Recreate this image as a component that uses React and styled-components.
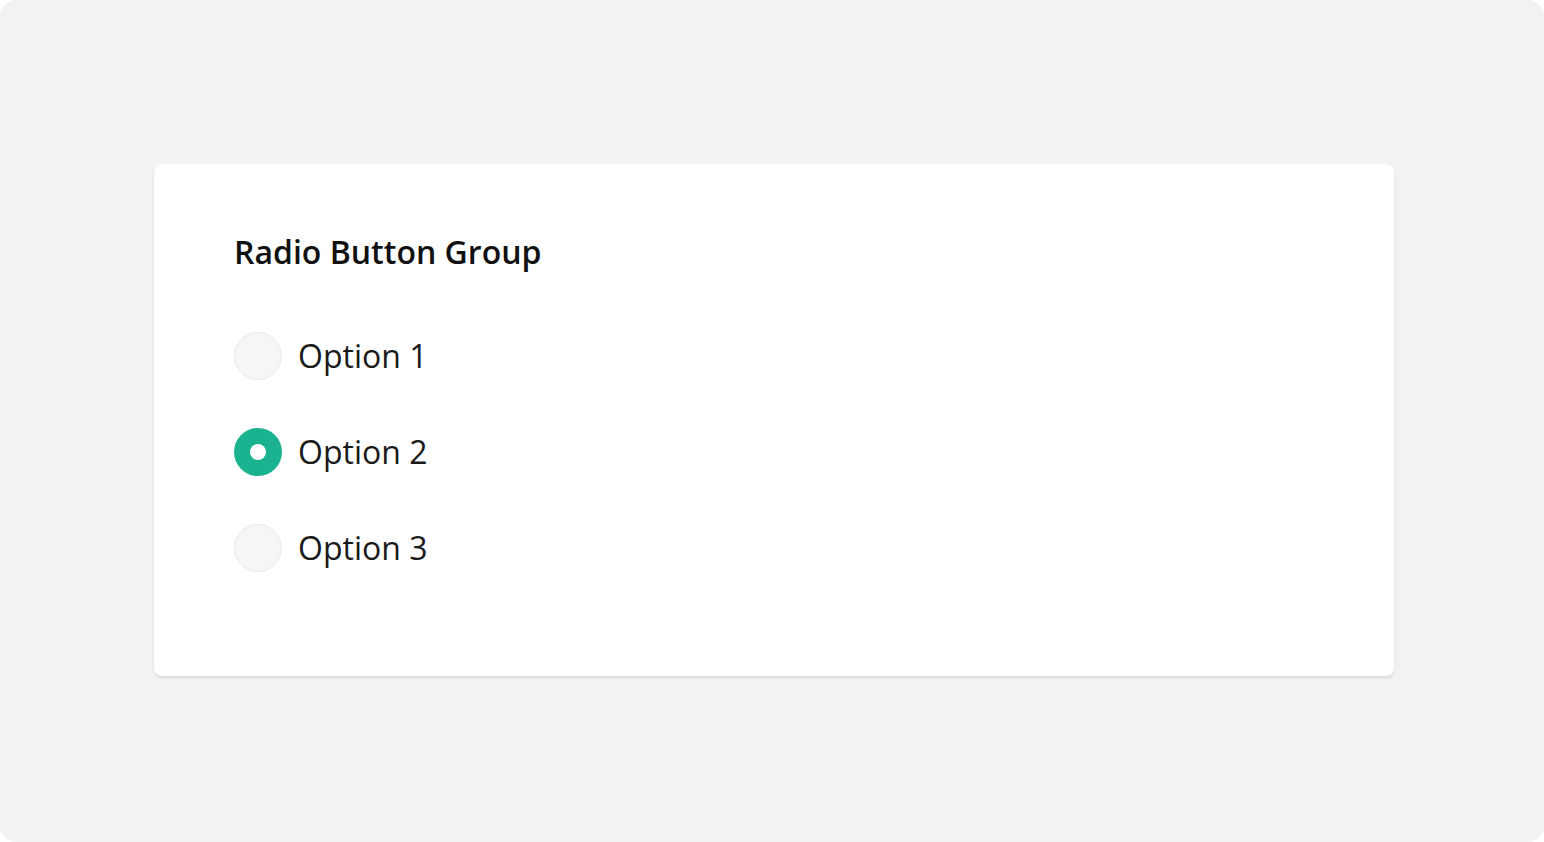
import React, { useState } from "react";
import styled, { createGlobalStyle } from "styled-components";

const Global = createGlobalStyle`
  html, body { margin: 0; padding: 0; background: #ffffff; }
  body { font-family: "Open Sans", "Noto Sans", sans-serif; }
  * { box-sizing: border-box; }
`;

const Frame = styled.div`
  width: 1544px;
  height: 842px;
  background: #f2f2f2;
  border-radius: 16px;
  padding: 164px 150px 0 154px;
  display: flex;
  align-items: flex-start;
`;

const Card = styled.div`
  width: 1240px;
  height: 512px;
  background: #ffffff;
  border-radius: 8px;
  box-shadow: 0 2px 3px rgba(0, 0, 0, 0.1);
  padding: 66px 80px;
  display: flex;
  flex-direction: column;
`;

const Title = styled.h2`
  margin: 0 0 58px;
  font-size: 32px;
  font-weight: 600;
  color: #111111;
  line-height: 44px;
`;

const List = styled.div`
  display: flex;
  flex-direction: column;
  gap: 48px;
`;

const Row = styled.label`
  display: flex;
  align-items: center;
  gap: 16px;
  cursor: pointer;
  height: 48px;
`;

const Circle = styled.span`
  width: 48px;
  height: 48px;
  border-radius: 50%;
  flex: none;
  display: flex;
  align-items: center;
  justify-content: center;
  background: ${(p) => (p.$checked ? "#1bb38f" : "#f6f6f6")};
  border: ${(p) => (p.$checked ? "none" : "1px solid #e8e8e8")};
`;

const Dot = styled.span`
  width: 16px;
  height: 16px;
  border-radius: 50%;
  background: #ffffff;
`;

const Label = styled.span`
  font-size: 32px;
  color: #1a1a1a;
  line-height: 44px;
`;

export default function App() {
  const [value, setValue] = useState(2);
  const options = [1, 2, 3];
  return (
    <>
      <Global />
      <Frame>
        <Card>
          <Title>Radio Button Group</Title>
          <List>
            {options.map((n) => (
              <Row key={n} onClick={() => setValue(n)}>
                <Circle $checked={value === n}>{value === n && <Dot />}</Circle>
                <Label>Option {n}</Label>
              </Row>
            ))}
          </List>
        </Card>
      </Frame>
    </>
  );
}
